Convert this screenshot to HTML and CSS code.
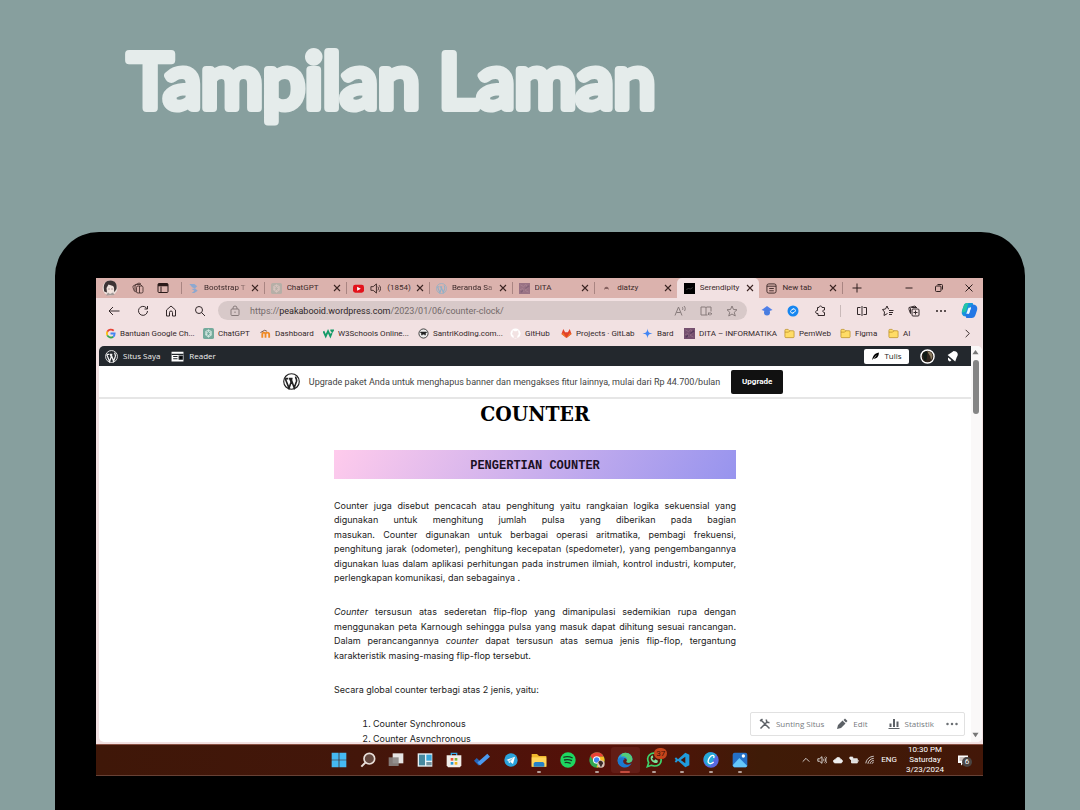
FILE: index.html
```html
<!DOCTYPE html>
<html lang="id">
<head>
<meta charset="utf-8">
<title>Tampilan Laman</title>
<link rel="stylesheet" href="styles.css">
</head>
<body>
<svg class="defs" aria-hidden="true">
  <symbol id="x" viewBox="0 0 12 12"><path d="M3 3l6 6M9 3l-6 6" fill="none" stroke="#3a2422" stroke-width="1.1"/></symbol>
  <symbol id="wp" viewBox="0 0 24 24"><circle cx="12" cy="12" r="11" fill="none" stroke="currentColor" stroke-width="1.6"/><path d="M3.2 8.2L8.5 21.300l3-8.600-1.800-4.700M8.500 21.300L3.200 8.200M3 8h4.500M8.500 8h5M11.200 8l4.600 12.800L19 12c1-3-1.500-4.500-1-7" fill="none" stroke="currentColor" stroke-width="2.300"/></symbol>
  <symbol id="folder" viewBox="0 0 24 24"><path d="M2 5a2 2 0 0 1 2-2h5l3 3h8a2 2 0 0 1 2 2v11a2 2 0 0 1-2 2H4a2 2 0 0 1-2-2z" fill="#ffdc66" stroke="#b68a20" stroke-width="1.500"/><path d="M2 9h8l3-3" fill="none" stroke="#b68a20" stroke-width="1.500"/></symbol>
  <symbol id="dita" viewBox="0 0 24 24"><path fill="#76506f" d="M0 0h24v24H0z"/><path d="M3 4l7 4 5-5 4 8-6 5 8 4M2 15l6-3 3 8" fill="none" stroke="#8d6a82" stroke-width="2"/><path d="M14 12l8-6M4 20l5-4" stroke="#54385a" stroke-width="3"/></symbol>
  <symbol id="gpt" viewBox="0 0 24 24"><rect width="24" height="24" rx="4" fill="#74aa9c"/><g fill="none" stroke="#e6f3ee" stroke-width="1.600"><path d="M12 4l6 3.500v8L12 20l-6-4.500v-8z"/><path d="M12 8l4 2.200v4L12 16.500l-4-2.300v-4zM12 4v4M18 8l-4 2M18 16l-4-2M12 20v-4M6 15l3-2M6 8l3 2"/></g></symbol>
</svg>

<header class="hero"><h1><svg><text x="6" y="78">Tampilan Laman</text></svg></h1></header>

<main class="laptop">
  <div class="screen">
    <div class="tabstrip">
      <div class="tab-tools">
        <svg class="i16" viewBox="0 0 32 32"><circle cx="16" cy="16" r="15" fill="#eadfda"/><path d="M4 20C2 7 8 1 17 1s14 7 12 17l-4 6c-2-3 1-8-3-12l-9-3-4 7 1 9c-4-1-6-2-6-4z" fill="#3c3334"/><path d="M10 16c4-1 6-3 7-5 1 3 4 4 6 5l-2 7-5 4-4-4z" fill="#f4e5df"/><path d="M8 31l4-6 4 3 6-3 3 5" fill="#a39a98"/><path d="M13 18h2M19 18h2" stroke="#442e2f" stroke-width="1.500"/></svg>
        <svg class="i12" viewBox="0 0 24 24" fill="none" stroke="#3a2625" stroke-width="1.600"><rect x="9" y="8" width="13" height="14" rx="3"/><path d="M5 19l-3-8a3 3 0 0 1 2-4l10-5 4 2M9 20a3 3 0 0 1-3-3V8a3 3 0 0 1 3-3h8l3 3M15 8v14"/></svg>
        <svg class="i12" viewBox="0 0 24 24" fill="none" stroke="#2b1b1a" stroke-width="2"><rect x="2" y="3" width="20" height="18" rx="2"/><path d="M2 5h20M2 7h20" stroke-width="3"/><path d="M8 9v12"/></svg>
      </div>
      <nav class="tabs" aria-label="Tab">
        <div class="tab"><svg viewBox="0 0 24 24"><path d="M3 2h11l6 5-5 5-6-3zM8 13l8-1 5 5-7 5H8l6-5z" fill="#8da8d0"/></svg><span class="fade">Bootstrap T</span><button aria-label="Tutup"><svg><use href="#x"/></svg></button></div>
        <div class="tab"><svg class="dim"><use href="#gpt"/></svg><span>ChatGPT</span><button aria-label="Tutup"><svg><use href="#x"/></svg></button></div>
        <div class="tab media"><svg viewBox="0 0 24 24"><rect y="4" width="24" height="17" rx="5" fill="#e3121b"/><path d="M9 8l8 4.500L9 17z" fill="#fff"/></svg><svg viewBox="0 0 24 24" fill="none" stroke="#3a2625" stroke-width="2"><path d="M2 8h5l7-6v20l-7-6H2zM17 8c2 2 2 6 0 8M20 5c4 4 4 10 0 14"/></svg><span>(1854)</span><button aria-label="Tutup"><svg><use href="#x"/></svg></button></div>
        <div class="tab"><svg class="pale"><use href="#wp"/></svg><span class="fade">Beranda Sa</span><button aria-label="Tutup"><svg><use href="#x"/></svg></button></div>
        <div class="tab"><svg class="half"><use href="#dita"/></svg><span>DITA</span><button aria-label="Tutup"><svg><use href="#x"/></svg></button></div>
        <div class="tab"><svg viewBox="0 0 24 24"><path d="M7 15c0-5 2-7 5-7s5 2 5 7l-2-2h-6z" fill="#85615f"/></svg><span>diatzy</span><button aria-label="Tutup"><svg><use href="#x"/></svg></button></div>
        <div class="tab active"><svg viewBox="0 0 24 24"><path d="M0 0h24v24H0z"/><path d="M5 14l5-2 4 1 5-3" fill="none" stroke="#555" stroke-width="1.500"/></svg><span>Serendipity</span><button aria-label="Tutup"><svg><use href="#x"/></svg></button></div>
        <div class="tab"><svg viewBox="0 0 24 24" fill="none" stroke="#3a2625" stroke-width="2"><rect x="2" y="2" width="20" height="20" rx="4"/><path d="M2 7h20M7 12h10M7 17h10"/></svg><span>New tab</span><button aria-label="Tutup"><svg><use href="#x"/></svg></button></div>
      </nav>
      <div class="window-tools">
        <button aria-label="Tab baru"><svg class="i12" viewBox="0 0 24 24"><path d="M12 3v18M3 12h18" stroke="#2e1f1e" stroke-width="2"/></svg></button>
        <button class="push" aria-label="Perkecil"><svg class="i12" viewBox="0 0 24 24"><path d="M5 12h14" stroke="#2e1f1e" stroke-width="2"/></svg></button>
        <button aria-label="Pulihkan"><svg class="i12" viewBox="0 0 24 24" fill="none" stroke="#2e1f1e" stroke-width="2"><rect x="5" y="8" width="11" height="11" rx="2"/><path d="M9 5h8a2 2 0 0 1 2 2v8"/></svg></button>
        <button aria-label="Tutup jendela"><svg class="i12" viewBox="0 0 24 24"><path d="M5 5l14 14M19 5L5 19" stroke="#2e1f1e" stroke-width="2"/></svg></button>
      </div>
    </div>

    <div class="toolbar">
      <div class="nav-tools">
        <button aria-label="Kembali"><svg viewBox="0 0 24 24"><path d="M23 12H2M10 4l-8 8 8 8"/></svg></button>
        <button aria-label="Muat ulang"><svg viewBox="0 0 24 24"><path d="M21 12a9 9 0 1 1-3-7l3 3M21 2v6h-6"/></svg></button>
        <button aria-label="Beranda"><svg viewBox="0 0 24 24"><path d="M3 10l9-8 9 8v12h-6v-7a3 3 0 0 0-6 0v7H3z"/></svg></button>
        <button aria-label="Cari"><svg viewBox="0 0 24 24"><circle cx="10" cy="10" r="7"/><path d="M15 15l7 7"/></svg></button>
      </div>
      <div class="address">
        <svg viewBox="0 0 24 24"><rect x="4" y="8" width="16" height="13" rx="2"/><path d="M8 8V6a4 4 0 0 1 8 0v2M12 13v3"/></svg>
        <span class="url" role="textbox" aria-label="Alamat">https://<b>peakabooid.wordpress.com</b>/2023/01/06/counter-clock/</span>
        <svg viewBox="0 0 24 24"><path d="M2 21L9 4l7 17M5 15h8M16 4c2 1 2 4 1 6M20 2c3 3 3 7 1 10"/></svg>
        <svg viewBox="0 0 24 24"><path d="M12 5v15H2V4h8l2 1 2-1h8v9M12 20h3M17 15v5M20 14v7M23 16v3"/></svg>
        <svg viewBox="0 0 24 24"><path d="M12 2l3 7 7 .5-5.500 5 2 7.500-6.500-4-6.500 4 2-7.500L2 9.500 9 9z"/></svg>
      </div>
      <div class="ext-tools">
        <button aria-label="Scholar"><svg viewBox="0 0 24 24" stroke="none"><path d="M12 2L1 10l6 2h10l6-2z" fill="#4f7fe8"/><circle cx="12" cy="15" r="6" fill="#4a7de0"/></svg></button>
        <button aria-label="Shazam"><svg viewBox="0 0 24 24"><circle cx="12" cy="12" r="11" fill="#1686f0" stroke="none"/><path d="M13 7l-4 3c-5 4 1 8 4 5M11 17l4-3c5-4-1-8-4-5" stroke="#fff"/></svg></button>
        <button aria-label="Ekstensi"><svg viewBox="0 0 24 24"><path d="M7 5h3c0-4 6-4 6 0h5v5c-4-1-5 5 0 5v6H8v-4c-6 2-6-7-1-6z"/></svg></button>
        <i></i>
        <button aria-label="Layar terpisah"><svg viewBox="0 0 24 24"><path d="M9 5H3v14h6M15 5h6v14h-6M12 2v20"/></svg></button>
        <button aria-label="Favorit"><svg viewBox="0 0 24 24"><path d="M14 8l-2-1-2-5-3 6-6 1 4 5-1 7 7-4M14 11h9M14 15h8M14 19h6"/></svg></button>
        <button aria-label="Koleksi"><svg viewBox="0 0 24 24"><rect x="8" y="8" width="14" height="14" rx="2"/><path d="M5 17l-3-8V5l12-3 3 3M5 17V7l2-2h11M15 11v8M11 15h8"/></svg></button>
        <button aria-label="Lainnya"><svg viewBox="0 0 24 24" fill="#2b2020" stroke="none"><circle cx="4" cy="12" r="2"/><circle cx="12" cy="12" r="2"/><circle cx="20" cy="12" r="2"/></svg></button>
        <button class="copilot" aria-label="Copilot"><svg viewBox="0 0 32 32" stroke="none"><path d="M12 2h10l3 8h-8l-5 17H8c-5 0-8-5-6-11l3-9c1-3 3-5 7-5z" fill="#1595dd"/><path d="M20 30H10l-3-8h8l5-17h4c5 0 8 5 6 11l-3 9c-1 3-3 5-7 5z" fill="#2377e5"/><path d="M3 13l3-8c2-3 4-3 8-3l-5 16-7 2z" fill="#25c5a4"/><path d="M14 11h5l-4 11h-5z" fill="#eef8ff"/></svg></button>
      </div>
    </div>

    <nav class="bookmarks" aria-label="Bookmark">
      <a href="#"><svg viewBox="0 0 24 24" fill="none" stroke-width="4"><path d="M19 6a9 9 0 0 0-14 2" stroke="#e84336"/><path d="M5 8a9 9 0 0 0 0 8" stroke="#fabb05"/><path d="M5 16a9 9 0 0 0 13 3" stroke="#34a853"/><path d="M18 19c3-2 3-4 3-7h-9" stroke="#4285f4"/></svg>Bantuan Google Ch...</a>
      <a href="#"><svg><use href="#gpt"/></svg>ChatGPT</a>
      <a href="#"><svg viewBox="0 0 24 24" fill="none" stroke="#f08a24" stroke-width="4"><path d="M5 21v-7c0-5 7-5 7 0v7M12 14c0-5 8-5 8 0v7"/><path d="M1 10l9-5 5 2" stroke="#6d4b38" stroke-width="2"/></svg>Dashboard</a>
      <a href="#"><svg viewBox="0 0 24 24" fill="none" stroke="#159b68" stroke-width="4"><path d="M1 7l5 11 5-11 5 11 3-7M16 5h6l-3 5"/></svg>W3Schools Online...</a>
      <a href="#"><svg viewBox="0 0 24 24"><circle cx="12" cy="12" r="10" fill="#eee" stroke="#333" stroke-width="2"/><path d="M5 8h14v3h-2v5h-3v-2h-4v2H7v-5H5z" fill="#222"/></svg>SantriKoding.com...</a>
      <a href="#"><svg viewBox="0 0 24 24"><circle cx="12" cy="12" r="11" fill="#fff"/><path d="M8 22v-5c-4-2-4-6-2-8V5l4 2h4l4-2v4c2 3 1 6-2 8v5" fill="#f2e2e2"/></svg>GitHub</a>
      <a href="#"><svg viewBox="0 0 24 24"><path d="M1 13L5 2l4 7h6l4-7 4 11-11 9z" fill="#e24329"/><path d="M1 13l4-2 7 11zM23 13l-4-2-7 11z" fill="#f07a26"/></svg>Projects · GitLab</a>
      <a href="#"><svg viewBox="0 0 24 24"><path d="M12 1c1 8 3 10 11 11-8 1-10 3-11 11-1-8-3-10-11-11 8-1 10-3 11-11z" fill="#4285f4"/></svg>Bard</a>
      <a href="#"><svg><use href="#dita"/></svg>DITA – INFORMATIKA</a>
      <a href="#"><svg><use href="#folder"/></svg>PemWeb</a>
      <a href="#"><svg><use href="#folder"/></svg>Figma</a>
      <a href="#"><svg><use href="#folder"/></svg>AI</a>
      <button aria-label="Bookmark lainnya"><svg viewBox="0 0 24 24"><path d="M8 4l8 8-8 8" fill="none" stroke="#2b2020" stroke-width="2"/></svg></button>
    </nav>

    <div class="viewport">
      <section class="page">
        <div class="wpbar">
          <a href="#"><svg><use href="#wp"/></svg>Situs Saya</a>
          <a href="#"><svg viewBox="0 0 24 24"><path d="M1 3h22v18H1z" fill="#fff"/><path d="M1 8h22M4 12h8M4 16h8M15 11h6v6h-6z" stroke="#23282d" stroke-width="2"/></svg>Reader</a>
          <button class="write"><svg viewBox="0 0 24 24"><path d="M3 22c1-10 6-19 18-21 0 9-4 17-15 17z"/><path d="M4 22L14 9" stroke="#fff" stroke-width="1.500"/></svg>Tulis</button>
          <svg class="avatar" viewBox="0 0 32 32"><circle cx="16" cy="16" r="14" fill="#30251d" stroke="#fff" stroke-width="3"/><path d="M15 5c10 0 15 9 9 18-2-3-1-8-4-10z" fill="#8a7b60"/><path d="M6 10c4-5 7-5 10-4l-2 18-5 1z" fill="#101a15"/></svg>
          <svg class="bell" viewBox="0 0 24 24"><path d="M14 2c7 0 10 6 6 11l-3 8L3 9l8-5zM4 14l6 5c-3 5-8 0-6-5z" fill="#fff"/></svg>
        </div>
        <div class="notice">
          <svg><use href="#wp"/></svg>
          <p>Upgrade paket Anda untuk menghapus banner dan mengakses fitur lainnya, mulai dari Rp 44.700/bulan</p>
          <button>Upgrade</button>
        </div>
        <article>
          <h2>COUNTER</h2>
          <h3>PENGERTIAN COUNTER</h3>
          <p>Counter juga disebut pencacah atau penghitung yaitu rangkaian logika sekuensial yang digunakan untuk menghitung jumlah pulsa yang diberikan pada bagian masukan.&nbsp;Counter&nbsp;digunakan untuk berbagai operasi aritmatika, pembagi frekuensi, penghitung jarak (odometer), penghitung kecepatan (spedometer), yang pengembangannya digunakan luas dalam aplikasi perhitungan pada instrumen ilmiah, kontrol industri, komputer, perlengkapan komunikasi, dan sebagainya .</p>
          <p><em>Counter</em> tersusun atas sederetan flip-flop yang dimanipulasi sedemikian rupa dengan menggunakan peta Karnough sehingga pulsa yang masuk dapat dihitung sesuai rancangan. Dalam perancangannya <em>counter</em> dapat tersusun atas semua jenis flip-flop, tergantung karakteristik masing-masing flip-flop tersebut.</p>
          <p>Secara global counter terbagi atas 2 jenis, yaitu:</p>
          <ol><li>Counter Synchronous</li><li>Counter Asynchronous</li></ol>
        </article>
        <div class="actions">
          <a href="#"><svg viewBox="0 0 24 24" fill="none" stroke="#5c6166" stroke-width="3"><path d="M3 3l18 18M2 6l5-4M3 21l9-9M12 12l4-4M21 9c-4 1-7-2-6-6"/></svg>Sunting Situs</a>
          <a href="#"><svg viewBox="0 0 24 24" fill="#5c6166"><path d="M2 22l2-8L13 5l6 6L10 20zM15 4l3-3 5 5-3 3z"/></svg>Edit</a>
          <a href="#"><svg viewBox="0 0 24 24" fill="#5c6166"><path d="M1 20h22v2H1zM3 11h4v7H3zM10 2h4v16h-4zM17 7h4v11h-4z"/></svg>Statistik</a>
          <button aria-label="Lainnya"><svg viewBox="0 0 24 24" fill="#6c7074"><circle cx="3" cy="12" r="2.500"/><circle cx="12" cy="12" r="2.500"/><circle cx="21" cy="12" r="2.500"/></svg></button>
        </div>
      </section>
      <div class="scrollbar">
        <svg viewBox="0 0 8 8"><path d="M4 1l3.500 5h-7z"/></svg><div class="thumb"></div><svg viewBox="0 0 8 8"><path d="M4 7l3.500-5h-7z"/></svg>
      </div>
    </div>

    <footer class="taskbar">
      <div class="apps">
        <button aria-label="Start"><svg viewBox="0 0 24 24" fill="#45b9f2"><path d="M1 1h10.500v10.500H1zM12.500 1H23v10.500H12.500zM1 12.500h10.500V23H1zM12.500 12.500H23V23H12.500z"/></svg></button>
        <button aria-label="Cari"><svg viewBox="0 0 24 24"><circle cx="14" cy="10" r="8" fill="#65483f" stroke="#e9ded9" stroke-width="2.500"/><path d="M8 16l-6 6" stroke="#e9ded9" stroke-width="3"/></svg></button>
        <button aria-label="Tampilan tugas"><svg viewBox="0 0 24 24"><path d="M7 2h16v15H7z" fill="#e7e5e4"/><path d="M1 8h15v13H1z" fill="#8a8583" opacity=".9"/></svg></button>
        <button aria-label="Widget"><svg viewBox="0 0 24 24"><path d="M1 2h22v20H1z" fill="#e8f2f6"/><path d="M3 4h9v16H3z" fill="#47899f"/><path d="M14 4h8v9h-8z" fill="#38a6d8"/><path d="M14 15h8v5h-8z" fill="#7293a0"/></svg></button>
        <button aria-label="Store"><svg viewBox="0 0 24 24"><path d="M8 6V2h8v4" fill="none" stroke="#34a9e7" stroke-width="2"/><path d="M1 5h22v15l-2 3H3l-2-3z" fill="#f2eee9"/><path d="M7 9h4v4H7z" fill="#ef5230"/><path d="M13 9h4v4h-4z" fill="#7db53b"/><path d="M7 15h4v4H7z" fill="#2198d8"/><path d="M13 15h4v4h-4z" fill="#eeb51e"/></svg></button>
        <button aria-label="To Do"><svg viewBox="0 0 24 24" fill="none" stroke-width="6"><path d="M2 11l7 7" stroke="#2563b8"/><path d="M7 18L22 5" stroke="#4b9af0"/></svg></button>
        <button aria-label="Telegram"><svg viewBox="0 0 24 24"><circle cx="12" cy="12" r="10" fill="#2aa3dc"/><path d="M5 12l13-5-3 11-4-3-2 2-1-4z" fill="#fff"/><path d="M8 13l8-5-5 7" fill="#9acbe3"/></svg></button>
        <button class="open" aria-label="File Explorer"><svg viewBox="0 0 24 24"><path d="M1 3h8l3 3h11v16H1z" fill="#f0b72c"/><path d="M1 8h22v14H1z" fill="#ffd65b"/><path d="M4 22v-5l2-2h12l2 2v5z" fill="#2582c9"/></svg></button>
        <button aria-label="Spotify"><svg viewBox="0 0 24 24"><circle cx="12" cy="12" r="11.500" fill="#1ed760"/><path d="M5 8c5-2 10-1 14 1M6 12c4-1 8-1 12 1M7 16c4-1 6 0 9 1" fill="none" stroke="#173821" stroke-width="2"/></svg></button>
        <button class="open" aria-label="Chrome"><svg viewBox="0 0 24 24"><circle cx="12" cy="12" r="11.500" fill="#32a852"/><path d="M2 6c5-8 17-7 20 1H12l-4 8z" fill="#e94235"/><path d="M22 7H13l3 7-5 9c9 1 15-8 11-16z" fill="#f9bd25"/><circle cx="11.500" cy="12" r="5.500" fill="#fff"/><circle cx="11.500" cy="12" r="4" fill="#4286f5"/><circle cx="18" cy="18" r="5.500" fill="#d9c3b8"/><path d="M14 16c1-5 7-3 7 1l-3 6z" fill="#3b2b29"/></svg></button>
        <button class="open current" aria-label="Edge"><svg viewBox="0 0 24 24"><path d="M1 13C1 5 7 1 13 1c7 0 11 6 10 11-1 4-6 5-9 3 2-3 0-6-4-6-5 0-6 8-1 12-5 0-8-4-8-8z" fill="#2797dd"/><path d="M7 3c8-5 17 2 16 9-1 4-6 5-9 3 4-5-2-10-8-8z" fill="#54cc78"/><path d="M1 12c1-5 9-6 11-1-4 0-4 7 3 8 3 0 5-1 7-2-4 7-11 8-17 4-3-2-4-5-4-9z" fill="#1b79d0"/></svg></button>
        <button class="open" aria-label="WhatsApp"><svg viewBox="0 0 24 24"><path d="M2 22l2-6C-1 6 8-1 17 3c9 5 7 18-4 18l-5-1z" fill="none" stroke="#3ed36a" stroke-width="2.500"/><path d="M8 6c-4 5 4 13 9 10l1-3-4-2-2 2-3-3 2-2-1-3z" fill="#7ce49a"/></svg><span class="badge">37</span></button>
        <button class="open" aria-label="VS Code"><svg viewBox="0 0 24 24"><path d="M17 1l6 3v16l-6 3L6 13l-3 3-2-2 2-2-2-2 2-2 3 3z" fill="#209bdd"/><path d="M17 7v10l-7-5z" fill="#43140a"/></svg></button>
        <button class="open" aria-label="Canva"><svg viewBox="0 0 24 24"><circle cx="12" cy="12" r="11.500" fill="#5869e2"/><path d="M1 9C3-1 15-2 20 4l-9 17C4 21 1 15 1 9z" fill="#25a9d8"/><path d="M16 9c2-5-3-5-6-1-5 7-1 13 6 7" fill="none" stroke="#fff" stroke-width="2"/></svg></button>
        <button class="open" aria-label="Foto"><svg viewBox="0 0 24 24"><rect x="1" y="1" width="22" height="22" rx="3" fill="#2470c7"/><path d="M1 20L11 9l12 12-2 2H3z" fill="#65c7fb"/><circle cx="17" cy="6" r="2.500" fill="#fff"/></svg></button>
      </div>
      <div class="tray">
        <svg viewBox="0 0 24 24"><path d="M4 16l8-8 8 8"/></svg>
        <svg viewBox="0 0 24 24"><path d="M2 9h4l6-5v16l-6-5H2zM15 9c2 2 2 4 0 6M18 6c4 4 4 8 0 12M21 4c5 5 5 11 0 16"/></svg>
        <svg viewBox="0 0 24 24"><path d="M5 19c-6-1-5-8 1-8 2-7 11-6 12-1 6 1 6 8 1 9z" fill="#eee"/></svg>
        <svg viewBox="0 0 24 24"><path d="M6 9h14v10H6zM22 12v4" fill="#ddd"/><path d="M2 5h7v4c-2 3-5 3-7 0z" fill="#eee"/></svg>
        <svg viewBox="0 0 24 24"><path d="M2 20C3 11 10 4 21 3M7 21c1-7 6-12 14-13M12 21c1-4 4-8 9-8M17 21c0-2 2-4 4-4"/></svg>
        <span class="lang">ENG</span>
        <time datetime="2024-03-23T22:30">10:30 PM<br>Saturday<br>3/23/2024</time>
        <div class="note"><svg viewBox="0 0 24 24"><path d="M2 3h20v15h-9l-5 5v-5H2z" fill="#fff"/><path d="M5 8h14M5 12h14" stroke="#43140a"/></svg><span>6</span></div>
      </div>
    </footer>
  </div>
</main>
</body>
</html>
```
FILE: styles.css
```css
* { box-sizing: border-box; }
body {
  margin: 0;
  height: 100vh;
  display: flex;
  flex-direction: column;
  overflow: hidden;
  background: #879f9e;
  font: 8px/12px Roboto, "Open Sans", sans-serif;
  color: #33282a;
}
h1, h2, h3, p, ol { margin: 0; }
button { padding: 0; border: 0; background: none; font: inherit; color: inherit; display: flex; align-items: center; justify-content: center; }
a { color: inherit; text-decoration: none; }
svg { flex: none; display: block; }
.defs { position: absolute; width: 0; height: 0; }
.i12 { width: 12px; height: 12px; }
.i16 { width: 16px; height: 16px; }

.hero { flex: none; height: 232px; padding: 30px 122px; }
.hero svg { width: 100%; height: 120px; overflow: visible; }
.hero text {
  font: 400 75px Lato, sans-serif;
  fill: #e5eceb;
  stroke: #e5eceb;
  stroke-width: 8px;
  stroke-linejoin: round;
}

.laptop { flex: 1; min-height: 0; margin: 0 55px; padding: 46px 42px 34px 41px; background: #000; border-radius: 44px 44px 0 0; display: flex; }
.screen { flex: 1; min-width: 0; display: flex; flex-direction: column; background: #f2e1e2; }

.tabstrip { flex: none; height: 20px; display: flex; background: #dbb2ad; }
.tab-tools { width: 85px; padding: 0 8px 0 6px; display: flex; align-items: center; justify-content: space-between; }
.tab-tools svg:last-child { margin-right: 4px; }
.tabs { flex: 1; min-width: 0; display: flex; }
.tab { flex: 1; min-width: 0; display: flex; align-items: center; padding: 0 3px 0 6px; }
.tab::before { content: ""; width: 1px; height: 12px; background: #a98582; margin: 0 6px 0 -6px; }
.tab > svg { width: 11px; height: 11px; margin-right: 5px; }
.tab span { flex: 1; min-width: 0; overflow: hidden; white-space: nowrap; color: #3c2a2a; }
.tab button svg { width: 12px; height: 12px; }
.tab .fade { -webkit-mask-image: linear-gradient(90deg, #000 75%, transparent); mask-image: linear-gradient(90deg, #000 75%, transparent); }
.tab.media > svg { margin-right: 6px; }
.tab.active { background: #f2e1e2; border-radius: 5px 5px 0 0; }
.tab.active::before, .tab.active + .tab::before { background: transparent; }
.dim { opacity: .35; }
.half { opacity: .65; }
.pale { color: #8fb0c8; }
.window-tools { width: 141px; padding: 0 8px 0 8px; display: flex; align-items: center; gap: 18px; }
.window-tools::before { content: ""; width: 1px; height: 12px; margin: 0 -10px 0 -8px; background: #a98582; }
.window-tools .push { margin-left: auto; }

.toolbar { flex: none; height: 25px; display: flex; align-items: center; }
.toolbar svg { width: 12px; height: 12px; fill: none; stroke: #33282a; stroke-width: 2; }
.nav-tools { width: 122px; padding: 0 12px; display: flex; justify-content: space-between; }
.address { flex: 1; min-width: 0; height: 19px; padding: 0 9px 0 11px; border-radius: 10px; background: #d8c9c9; display: flex; align-items: center; gap: 14px; color: #746a6a; }
.toolbar .address svg { stroke: #877b7b; }
.url { flex: 1; font-size: 9px; white-space: nowrap; margin-left: -5px; }
.url b { font-weight: 400; color: #2f2728; }
.ext-tools { width: 236px; padding: 0 5px 0 14px; display: flex; align-items: center; justify-content: space-between; }
.ext-tools i { width: 1px; height: 12px; background: #c9b9b9; }
.ext-tools svg[stroke="none"] { stroke: none; }
.ext-tools svg[fill] { fill: #2b2020; }
.ext-tools .copilot svg { width: 17px; height: 17px; }

.bookmarks { flex: none; height: 22px; padding: 0 10px 1px 9px; display: grid; grid-template-columns: 98px 57px 63px 95px 92px 51px 81px 42px 100px 56px 48px 1fr 12px; align-items: center; }
.bookmarks a { display: flex; align-items: center; gap: 4px; white-space: nowrap; }
.bookmarks svg { width: 11px; height: 11px; }

.viewport { flex: 1; min-height: 0; margin: 1px 1px 2px 3px; display: flex; background: #fff; border-radius: 5px; overflow: hidden; }
.page { flex: 1; min-width: 0; position: relative; overflow: hidden; }
.wpbar { height: 20px; padding: 0 12px 0 6px; background: #23282d; color: #f0f0f0; font-family: "Open Sans", sans-serif; display: flex; align-items: center; gap: 11px; }
.wpbar a { display: flex; align-items: center; gap: 5px; }
.wpbar a svg { width: 13px; height: 13px; }
.write { margin-left: auto; width: 45px; height: 15px; gap: 4px; background: #fff; color: #222; border-radius: 2px; }
.write svg { width: 9px; height: 9px; }
.avatar { width: 15px; height: 15px; }
.bell { width: 13px; height: 13px; }
.notice { height: 33px; padding-right: 4px; display: flex; align-items: center; justify-content: center; gap: 9px; border-bottom: 2px solid #e6e6e6; color: #444; font-size: 9px; }
.notice svg { width: 17px; height: 17px; color: #222; }
.notice button { width: 52px; height: 24px; margin-left: 2px; border-radius: 2px; background: #111; color: #fff; font-size: 8px; font-weight: 700; }

article { width: 402px; max-width: 100%; margin: 0 auto; font: 9px/1.6 Inter, "Liberation Sans", sans-serif; color: #222; }
h2 { padding: 3px 0 24px; text-align: center; font: bold 21px/24px "DejaVu Serif Condensed", "DejaVu Serif", serif; color: #000; }
h3 { height: 29px; margin-bottom: 20px; background: linear-gradient(120deg, #ffcbec, #9794ee); text-align: center; font: bold 12px/32px "Liberation Mono", monospace; color: #1b1024; }
article p { margin-bottom: 20px; text-align: justify; }
ol { padding-left: 39px; list-style-position: outside; }

.actions { position: absolute; right: 6px; bottom: 6px; height: 24px; padding: 0 6px 0 8px; display: flex; align-items: center; gap: 12px; background: #fff; border: 1px solid #e1e1e1; border-radius: 2px; color: #777b80; font-family: "Open Sans", sans-serif; }
.actions a { display: flex; align-items: center; gap: 5px; }
.actions a:nth-child(2) { margin-right: 8px; }
.actions svg { width: 12px; height: 12px; }

.scrollbar { width: 11px; padding: 3px 2px 4px 0; display: flex; flex-direction: column; align-items: center; background: #faf8f8; }
.scrollbar svg { width: 7px; height: 7px; fill: #777; }
.thumb { width: 6px; height: 54px; margin: 4px 0 auto; border-radius: 3px; background: #858585; }

.taskbar { flex: none; height: 32px; display: grid; grid-template-columns: 1fr 429px 1fr; align-items: center; background: linear-gradient(90deg, #3f1708, #43160a 30%, #561009 58%, #3f1b07 75%, #431708); border-top: 1px solid #8a5144; border-bottom: 1px solid #674135; }
.apps { grid-column: 2; display: grid; grid-template-columns: repeat(15, 1fr); }
.apps button { position: relative; height: 26px; }
.apps svg { width: 16px; height: 16px; }
.open::after { content: ""; position: absolute; bottom: 0; left: 50%; width: 4px; height: 2px; margin-left: -2px; border-radius: 1px; background: #b4a09a; }
.current { background: #621d16; border-radius: 3px; }
.current::after { width: 10px; margin-left: -5px; background: #c34b3e; }
.badge { position: absolute; top: 1px; right: 1px; width: 13px; height: 11px; border-radius: 6px; background: #c6451b; color: #3d1208; font-size: 8px; line-height: 11px; text-align: center; }
.tray { display: flex; align-items: center; justify-content: flex-end; gap: 6px; padding-right: 11px; color: #fff; }
.tray > svg { width: 10px; height: 10px; fill: none; stroke: #eee; stroke-width: 2; }
.tray time { width: 44px; font-size: 8px; line-height: 10px; text-align: center; }
.note { position: relative; margin-left: 4px; width: 15px; }
.note svg { width: 12px; height: 12px; }
.note span { position: absolute; right: 0; top: 3px; width: 10px; height: 10px; border-radius: 5px; background: #4a4442; line-height: 10px; text-align: center; }
```
